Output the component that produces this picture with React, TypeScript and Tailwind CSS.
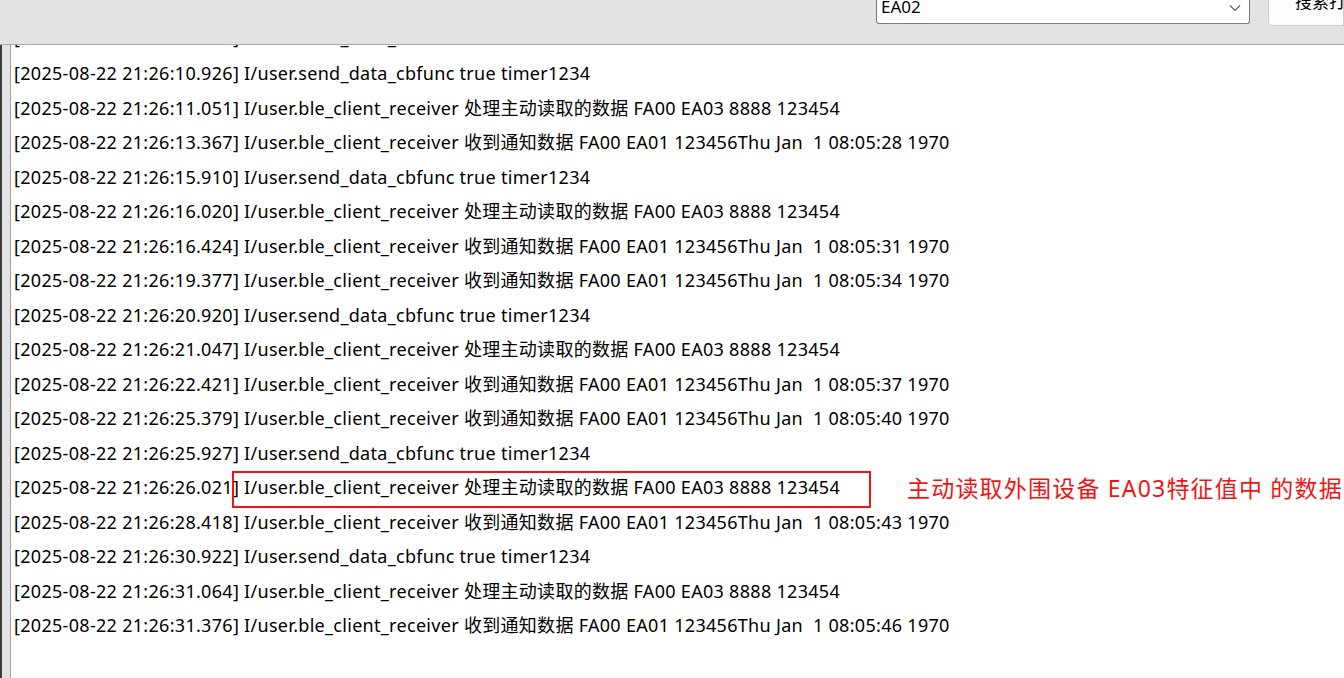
import React from "react";

const partial =
  "[2025-08-22 21:26:05.926] I/user.send_data_cbfunc true timer1234";

const lines: string[] = [
  "[2025-08-22 21:26:10.926] I/user.send_data_cbfunc true timer1234",
  "[2025-08-22 21:26:11.051] I/user.ble_client_receiver 处理主动读取的数据 FA00 EA03 8888 123454",
  "[2025-08-22 21:26:13.367] I/user.ble_client_receiver 收到通知数据 FA00 EA01 123456Thu Jan  1 08:05:28 1970",
  "[2025-08-22 21:26:15.910] I/user.send_data_cbfunc true timer1234",
  "[2025-08-22 21:26:16.020] I/user.ble_client_receiver 处理主动读取的数据 FA00 EA03 8888 123454",
  "[2025-08-22 21:26:16.424] I/user.ble_client_receiver 收到通知数据 FA00 EA01 123456Thu Jan  1 08:05:31 1970",
  "[2025-08-22 21:26:19.377] I/user.ble_client_receiver 收到通知数据 FA00 EA01 123456Thu Jan  1 08:05:34 1970",
  "[2025-08-22 21:26:20.920] I/user.send_data_cbfunc true timer1234",
  "[2025-08-22 21:26:21.047] I/user.ble_client_receiver 处理主动读取的数据 FA00 EA03 8888 123454",
  "[2025-08-22 21:26:22.421] I/user.ble_client_receiver 收到通知数据 FA00 EA01 123456Thu Jan  1 08:05:37 1970",
  "[2025-08-22 21:26:25.379] I/user.ble_client_receiver 收到通知数据 FA00 EA01 123456Thu Jan  1 08:05:40 1970",
  "[2025-08-22 21:26:25.927] I/user.send_data_cbfunc true timer1234",
  "[2025-08-22 21:26:26.021] I/user.ble_client_receiver 处理主动读取的数据 FA00 EA03 8888 123454",
  "[2025-08-22 21:26:28.418] I/user.ble_client_receiver 收到通知数据 FA00 EA01 123456Thu Jan  1 08:05:43 1970",
  "[2025-08-22 21:26:30.922] I/user.send_data_cbfunc true timer1234",
  "[2025-08-22 21:26:31.064] I/user.ble_client_receiver 处理主动读取的数据 FA00 EA03 8888 123454",
  "[2025-08-22 21:26:31.376] I/user.ble_client_receiver 收到通知数据 FA00 EA01 123456Thu Jan  1 08:05:46 1970",
];

export default function App() {
  return (
    <div
      className="w-[1344px] h-[678px] overflow-hidden bg-[#e3e3e3] flex flex-col"
      style={{ fontFamily: '"Noto Sans", "Noto Sans CJK SC", sans-serif' }}
    >
      {/* top toolbar */}
      <div className="h-[45px] shrink-0 flex items-start border-b border-[#a9a9a9] relative">
        <div className="w-[876px] shrink-0" />
        <div className="w-[374px] h-[25px] -mt-[1px] bg-white border border-[#7a7a7a] border-t-0 rounded-b-[3px] flex items-center justify-between pl-[4px] pr-[8px] shrink-0">
          <span className="text-[17px] leading-none text-black -mt-[9px]">EA02</span>
          <svg width="12" height="8" viewBox="0 0 12 8" className="-mt-[6px]">
            <path d="M1 1.5 L6 6.5 L11 1.5" fill="none" stroke="#606060" strokeWidth="1.2" />
          </svg>
        </div>
        <div className="w-[18px] shrink-0" />
        <div className="flex-1 h-[27px] -mt-[1px] bg-[#fdfdfd] border border-[#cfcfcf] border-t-0 rounded-bl-[5px] flex items-start pl-[26px] overflow-hidden">
          <span className="text-[17px] leading-none text-black -mt-[6px] whitespace-nowrap">搜索打开</span>
        </div>
      </div>
      {/* body */}
      <div className="flex-1 flex min-h-0">
        <div className="w-[2px] bg-[#3c3c3c] shrink-0" />
        <div className="w-[8px] bg-[#e3e3e3] shrink-0" />
        <div className="flex-1 bg-white border-l border-[#a0a0a0] relative overflow-hidden">
          <div className="pl-[3px]">
            <div className="h-[11.5px] overflow-hidden">
              <div className="mt-[-25px] h-[34.5px] flex items-center text-[18px] tracking-[0.3px] text-black whitespace-pre">
                {partial}
              </div>
            </div>
            {lines.map((l, i) => (
              <div
                key={i}
                className="h-[34.5px] flex items-center text-[18px] tracking-[0.3px] text-black whitespace-pre"
              >
                {l}
              </div>
            ))}
          </div>
          {/* annotation */}
          <div className="absolute left-[221px] top-[426px] w-[639px] h-[37px] border-2 border-[#f01414]" />
          <div className="absolute left-[896px] top-[426px] h-[34px] flex items-center text-[23px] tracking-[1.2px] text-[#f01414] whitespace-pre">
            主动读取外围设备 EA03特征值中 的数据
          </div>
        </div>
      </div>
    </div>
  );
}
